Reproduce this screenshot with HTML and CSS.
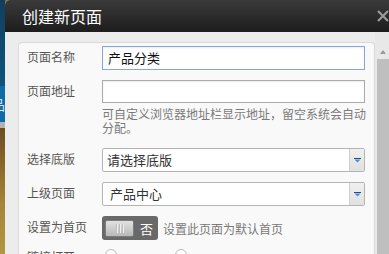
FILE: index.html
```html
<!DOCTYPE html>
<html>
	<head>
		<meta charset="UTF-8">
		<title>创建新页面</title>
		<link rel="stylesheet" href="styles.css">
	</head>
	<body>
		<div class="page">
			<div class="backdrop">
				<div class="bd-top"></div>
				<div class="bd-tab">品</div>
				<div class="bd-line"></div>
				<div class="bd-bottom"></div>
			</div>
			<div class="dialog">
				<div class="dlg-head">
					<span class="dlg-title">创建新页面</span>
					<svg class="dlg-close" width="12" height="12" viewBox="0 0 12 12"><path d="M1 1L11 11M11 1L1 11" stroke="#9a9a9a" stroke-width="2.2"/></svg>
				</div>
				<div class="dlg-body">
					<div class="dlg-scroll">
						<div class="panel">
							<div class="row">
								<label>页面名称</label>
								<div class="field"><div class="input focus">产品分类</div></div>
							</div>
							<div class="row">
								<label>页面地址</label>
								<div class="field">
									<div class="input"></div>
									<p class="help">可自定义浏览器地址栏显示地址，留空系统会自动分配。</p>
								</div>
							</div>
							<div class="row">
								<label>选择底版</label>
								<div class="field">
									<div class="select"><span>请选择底版</span><i class="arrow"><svg width="7" height="5" viewBox="0 0 7 5"><path d="M0 0.5H7" stroke="#1f4f80" stroke-width="1"/><path d="M0.5 1.5H6.5L3.5 4.5Z" fill="#4a90d0"/></svg></i></div>
								</div>
							</div>
							<div class="row">
								<label>上级页面</label>
								<div class="field">
									<div class="select"><span class="ind">产品中心</span><i class="arrow"><svg width="7" height="5" viewBox="0 0 7 5"><path d="M0 0.5H7" stroke="#1f4f80" stroke-width="1"/><path d="M0.5 1.5H6.5L3.5 4.5Z" fill="#4a90d0"/></svg></i></div>
								</div>
							</div>
							<div class="row">
								<label>设置为首页</label>
								<div class="field inline">
									<div class="switch"><span class="knob"><b></b><b></b><b></b></span><span class="sw-text">否</span></div>
									<span class="note">设置此页面为默认首页</span>
								</div>
							</div>
							<div class="row last">
								<label>链接打开</label>
								<div class="field inline">
									<span class="radio"></span>
									<span class="radio second"></span>
								</div>
							</div>
						</div>
					</div>
					<div class="scrollbar">
						<div class="sb-up"></div>
						<div class="sb-thumb"></div>
					</div>
				</div>
			</div>
		</div>
	</body>
</html>
```

FILE: styles.css
```css
*{margin:0;padding:0;box-sizing:border-box;}
html,body{width:389px;height:254px;overflow:hidden;}
body{font-family:"Noto Sans CJK SC","Liberation Sans",sans-serif;font-size:12px;color:#555;background:#8a6a34;}
.page{display:flex;height:254px;}

.backdrop{width:5px;display:flex;flex-direction:column;}
.bd-top{height:86px;background:linear-gradient(#123e5c,#0c557e);}
.bd-tab{height:36px;background:#0f6aa6;color:#cfe4f4;font-size:14px;line-height:36px;text-indent:-9px;overflow:hidden;white-space:nowrap;}
.bd-line{height:6px;background:#b2b2b2;}
.bd-bottom{flex:1;background:linear-gradient(#6e4c1e,#a68438 60%,#b29644);}

.dialog{flex:1;display:flex;flex-direction:column;background:#ececec;border-radius:5px 0 0 0;overflow:hidden;}
.dlg-head{height:32px;flex:none;display:flex;align-items:center;justify-content:space-between;padding:0 0 1px 17px;background:linear-gradient(#3a3a3a,#1d1d1d);}
.dlg-title{color:#fff;font-size:16px;line-height:20px;}

.dlg-body{flex:1;display:flex;min-height:0;}
.dlg-scroll{flex:1;padding:10px 0 0 13px;overflow:hidden;}
.panel{height:100%;background:#f9f9f9;border:1px solid #dadada;border-bottom:none;border-radius:4px 4px 0 0;padding:3px 8px 0 8px;}

.row{display:flex;margin-bottom:10px;}
.row label{width:75px;flex:none;padding-top:3px;line-height:15px;color:#555;white-space:nowrap;}
.field{flex:1;}
.field.inline{display:flex;align-items:center;}

.input{height:24px;border:1px solid #ababab;background:#fff;padding:0 5px;font-size:13px;line-height:22px;color:#111;box-shadow:inset 0 1px 2px rgba(0,0,0,.08);margin-right:1px;}
.input.focus{border-color:#86a6dc;}
.row:nth-child(2) .input{height:23px;}
.help{margin-top:4px;line-height:14px;color:#7a7a7a;}
.row:nth-child(2){margin-bottom:13px;}

.select{height:24px;display:flex;border:1px solid #b4b4b4;border-radius:2px;background:#fff;margin-right:1px;}
.select span{flex:1;padding-left:4px;font-size:13px;line-height:22px;color:#333;}
.select span.ind{padding-left:7px;}
.arrow{width:15px;flex:none;display:flex;align-items:center;justify-content:center;border-left:1px solid #cfcfcf;background:linear-gradient(#f0f0f0,#e0e0e0);}

.switch{width:56px;height:24px;flex:none;display:flex;align-items:center;background:#696969;border-radius:3px;padding-left:3px;}
.knob{width:29px;height:17px;display:flex;justify-content:center;align-items:center;gap:2px;border:1px solid #7c7c7c;border-radius:2px;background:linear-gradient(#e2e2e2,#b8b8b8);}
.knob b{width:1px;height:9px;background:#bdbdbd;box-shadow:1px 0 0 #f0f0f0;}
.sw-text{color:#fff;font-size:13px;margin-left:6px;}
.note{margin-left:5px;color:#7a7a7a;}

.row.last{margin-top:-1px;}
.row.last label{padding-top:0;}
.row.last .field{align-items:flex-start;}
.radio{width:12px;height:12px;border:1px solid #b9b9b9;border-radius:50%;background:#fff;margin:0 0 0 3px;}
.radio.second{margin-left:58px;}

.scrollbar{width:14px;flex:none;background:#e8e8e8;display:flex;flex-direction:column;padding-left:2px;}
.sb-up{height:27px;flex:none;position:relative;}
.sb-up:after{content:"";position:absolute;left:3px;top:18px;border:3px solid transparent;border-top:none;border-bottom:4px solid #9a9a9a;}
.sb-thumb{flex:1;background:#bfbfbf;}
```
